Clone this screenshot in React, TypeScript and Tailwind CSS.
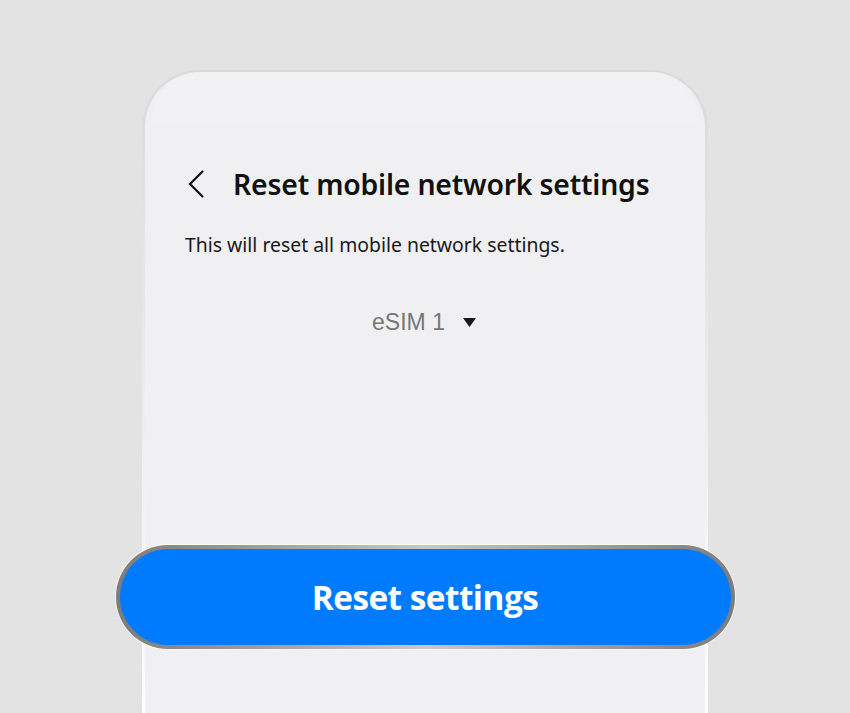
import React from 'react';

function BackChevron() {
  return (
    <svg width="20" height="30" viewBox="0 0 20 30" fill="none">
      <polyline points="17,2 4,15 17,28" stroke="#111" strokeWidth="2.2" strokeLinejoin="miter" />
    </svg>
  );
}

export default function App() {
  return (
    <div className="flex h-[713px] w-[850px] flex-col items-center overflow-hidden bg-[#e3e3e3] pt-[70px] font-['Noto_Sans',sans-serif]">
      {/* phone frame */}
      <div className="flex w-[566px] flex-1 flex-col rounded-t-[58px] bg-gradient-to-b from-[#dadada] via-[#ececec] to-white px-[3px] pt-[2px]">
        <div className="flex flex-1 flex-col items-center rounded-t-[55px] bg-[#f0f0f2]">
          {/* status bar */}
          <div className="h-[50px] w-[546px] rounded-t-[50px] bg-[#f2f2f4]" />

          <div className="flex w-full flex-col px-[40px]">
            <div className="mt-[47px] flex items-center">
              <span className="ml-[1px] flex h-[30px] w-[20px] items-center">
                <BackChevron />
              </span>
              <h1 className="ml-[27px] text-[28.4px] font-semibold leading-none tracking-[-0.2px] text-[#111]">
                Reset mobile network settings
              </h1>
            </div>

            <p className="mt-[36px] text-[19.4px] leading-none text-[#1a1a1a]">
              This will reset all mobile network settings.
            </p>

            <div className="mt-[57px] flex items-center justify-center gap-[18px] pr-[2px]">
              <span className="font-['Liberation_Sans',Arial,sans-serif] text-[23px] leading-none text-[#777]">
                eSIM 1
              </span>
              <svg width="13" height="9" viewBox="0 0 13 9">
                <polygon points="0,0 13,0 6.5,9" fill="#1a1a1a" />
              </svg>
            </div>
          </div>

          {/* action button */}
          <div className="mt-[211px] h-[104px] w-[619px] shrink-0 rounded-full bg-gradient-to-r from-[#7c7c7c] via-[#c8c8c8] to-[#7c7c7c] p-[4px] shadow-[0_0_0_1px_rgba(255,255,255,0.6)]">
            <div className="flex h-full w-full items-center justify-center rounded-full bg-[#007bfe]">
              <span className="font-['Open_Sans',sans-serif] text-[33.3px] font-bold leading-none tracking-[-0.5px] text-white">
                Reset settings
              </span>
            </div>
          </div>
        </div>
      </div>
    </div>
  );
}
